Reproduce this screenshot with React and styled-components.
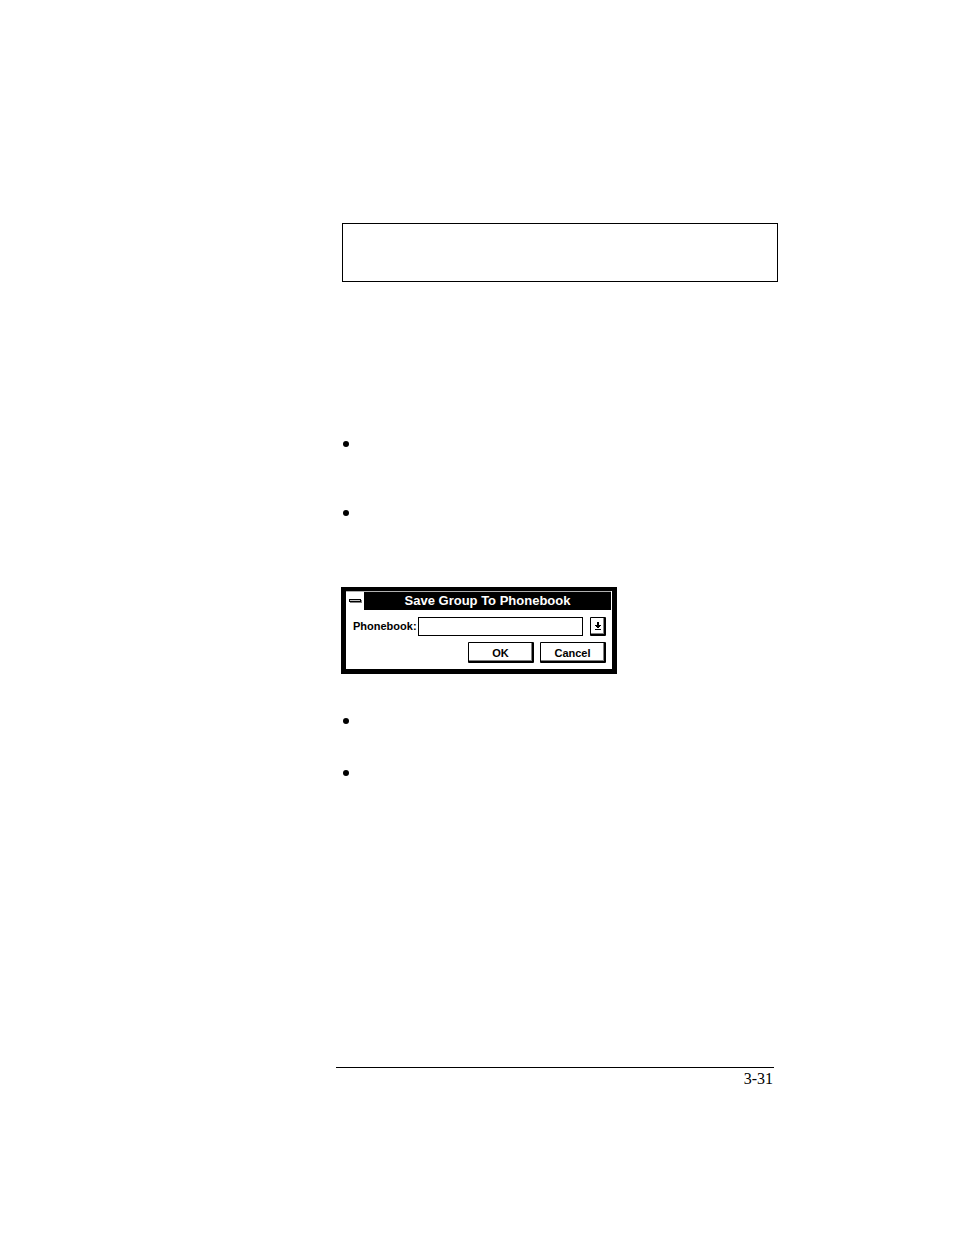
import styled, { createGlobalStyle } from 'styled-components';

const GlobalStyle = createGlobalStyle`
    * {
        box-sizing: border-box;
    }
    body {
        margin: 0;
        background: white;
        color: black;
    }
`;
const Page = styled.div`
    min-height: 100vh;
    padding: 223px 180px 146px 336px;
    display: flex;
    flex-direction: column;
`;
const Content = styled.main`
    flex: 1;
    margin-left: 6px;
`;
const Note = styled.aside`
    height: 59px;
    margin-right: -4px;
    border: 1px solid black;
`;
const BulletList = styled.ul`
    list-style: none;
    margin: ${(props) => props.$top} 0 0;
    padding: 0 0 0 1px;
    display: flex;
    flex-direction: column;
    gap: ${(props) => props.$gap};
`;
const Bullet = styled.li`
    height: 6px;
    &::before {
        content: '';
        display: block;
        width: 6px;
        height: 6px;
        border-radius: 50%;
        background: black;
    }
`;
const Dialog = styled.form`
    width: 276px;
    margin: 71px 0 0 -1px;
    border: 5px solid black;
    border-top-width: 4px;
    background: white;
    font-family: 'Liberation Sans', Arial, sans-serif;
    font-weight: bold;
`;
const TitleBar = styled.header`
    display: flex;
    height: 19px;
    margin-right: 1px;
    border-top: 1px solid #b0b0b0;
    background: black;
`;
const SystemMenu = styled.button`
    display: flex;
    align-items: center;
    justify-content: center;
    width: 18px;
    padding: 0;
    border: none;
    background: white;
`;
const Title = styled.h1`
    flex: 1;
    margin: 0;
    color: white;
    font-size: 13px;
    line-height: 18px;
    text-align: center;
`;
const Body = styled.div`
    padding: 7px 6px 6px 7px;
`;
const FieldRow = styled.div`
    display: flex;
    align-items: center;
`;
const Label = styled.label`
    width: 65px;
    font-size: 11px;
    line-height: 16px;
    padding-bottom: 2px;
`;
const Input = styled.input`
    flex: 1;
    min-width: 0;
    height: 19px;
    padding: 0 4px;
    border: 1px solid black;
    border-radius: 0;
    background: white;
    font: inherit;
    font-size: 11px;
    outline: none;
`;
const Button = styled.button`
    display: flex;
    align-items: center;
    justify-content: center;
    width: 66px;
    height: 21px;
    padding: 2px 0 0;
    border: 1px solid black;
    border-width: 1px 2px 2px 1px;
    border-radius: 1px;
    background: white;
    box-shadow: inset -1px -1px 0 #808080;
    color: black;
    font: inherit;
    font-size: 11px;
    line-height: 16px;
`;
const DropButton = styled(Button)`
    width: 16px;
    height: 19px;
    margin-left: 7px;
    padding: 0;
`;
const Actions = styled.div`
    display: flex;
    justify-content: flex-end;
    gap: 6px;
    margin-top: 6px;
`;
const Footer = styled.footer`
    border-top: 1px solid black;
    padding: 1px 1px 0;
    font-family: 'Liberation Serif', 'Times New Roman', serif;
    font-size: 16px;
    line-height: 20px;
    text-align: right;
`;

function SaveGroupDialog() {
    return (
        <Dialog onSubmit={(e) => e.preventDefault()}>
            <TitleBar>
                <SystemMenu type="button" aria-label="Window menu">
                    <svg width="14" height="4" shapeRendering="crispEdges">
                        <rect x="2" y="1" width="12" height="3" fill="#808080" />
                        <rect x="1" y="0" width="12" height="3" fill="black" />
                        <rect x="2" y="1" width="10" height="1" fill="#c0c0c0" />
                    </svg>
                </SystemMenu>
                <Title>Save Group To Phonebook</Title>
            </TitleBar>
            <Body>
                <FieldRow>
                    <Label htmlFor="phonebook">Phonebook:</Label>
                    <Input id="phonebook" type="text" />
                    <DropButton type="button" aria-label="Show phonebooks">
                        <svg width="9" height="10" shapeRendering="crispEdges">
                            <path d="M4 1h2v3h2v1h-1v1h-1v1h-2v-1h-1v-1h-1v-1h2z" />
                            <rect x="2" y="8" width="6" height="1" />
                        </svg>
                    </DropButton>
                </FieldRow>
                <Actions>
                    <Button type="submit">OK</Button>
                    <Button type="button">Cancel</Button>
                </Actions>
            </Body>
        </Dialog>
    );
}

function App() {
    return (
        <>
            <GlobalStyle />
            <Page>
                <Content>
                    <Note />
                    <BulletList $top="159px" $gap="63px">
                        <Bullet />
                        <Bullet />
                    </BulletList>
                    <SaveGroupDialog />
                    <BulletList $top="44px" $gap="46px">
                        <Bullet />
                        <Bullet />
                    </BulletList>
                </Content>
                <Footer>3-31</Footer>
            </Page>
        </>
    );
}

export default App;
